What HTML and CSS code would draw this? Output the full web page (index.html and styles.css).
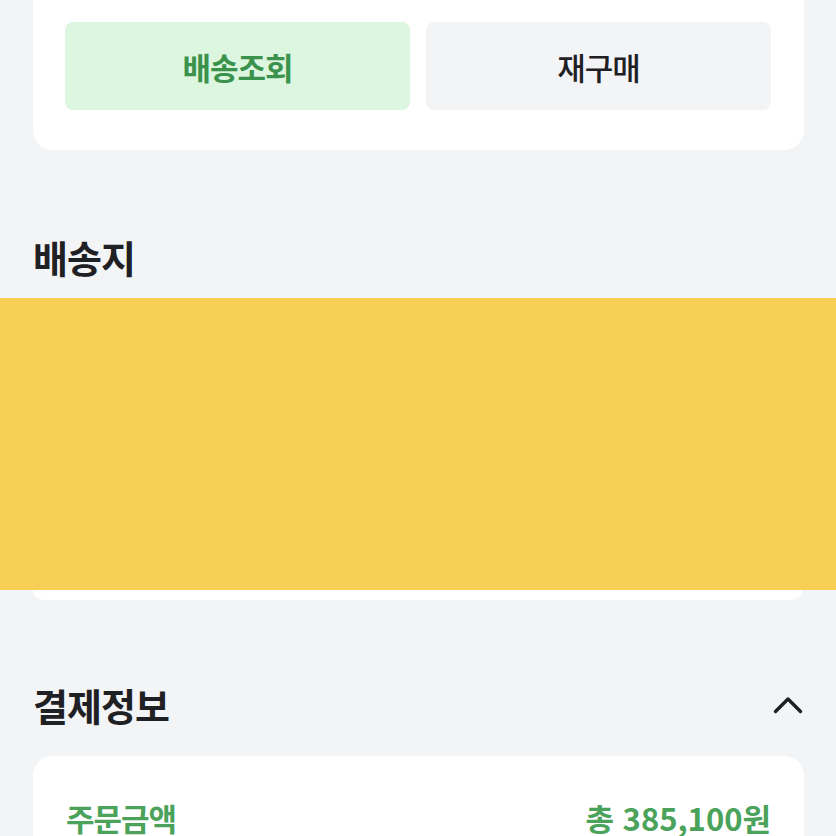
FILE: index.html
```html
<!DOCTYPE html>
<html lang="ko">
<head>
    <meta charset="UTF-8">
    <meta name="viewport" content="width=device-width, initial-scale=1.0">
    <title>주문상세</title>
    <link rel="stylesheet" href="styles.css">
</head>
<body>

<div class="top-card">
    <button class="btn btn-primary">배송조회</button>
    <button class="btn btn-gray">재구매</button>
</div>

<h2 class="section-title">배송지</h2>
<div class="address-banner"></div>
<div class="address-card"></div>

<div class="section-head">
    <h2 class="section-title flat">결제정보</h2>
    <svg class="chevron" width="30" height="18" viewBox="0 0 30 18">
        <path d="M2.5 15.5 L15 3 L27.5 15.5" fill="none" stroke="#1f2024" stroke-width="3.4" stroke-linecap="round" stroke-linejoin="round"/>
    </svg>
</div>

<div class="pay-card">
    <div class="pay-row">
        <span class="pay-label">주문금액</span>
        <span class="pay-value">총 385,100원</span>
    </div>
</div>

</body>
</html>
```

FILE: styles.css
```css
body {
    font-family: "Noto Sans CJK KR", "Noto Sans", sans-serif;
    margin: 0;
    padding: 0;
    background-color: #f2f4f6;
    color: #1f2024;
}
.top-card {
    display: flex;
    gap: 16px;
    margin: 0 32px 0 33px;
    padding: 22px 33px 40px 32px;
    background: #fff;
    border-radius: 0 0 20px 20px;
}
.btn {
    flex: 1;
    height: 88px;
    border: none;
    border-radius: 8px;
    font-family: inherit;
    font-size: 31px;
    letter-spacing: -1px;
    cursor: pointer;
}
.btn-primary {
    background-color: #ddf6e0;
    color: #3a924c;
    font-weight: 700;
}
.btn-gray {
    background-color: #f2f4f6;
    color: #1f2024;
    font-weight: 500;
}
.section-title {
    margin: 86px 33px 20px;
    font-size: 38px;
    line-height: 42px;
    font-weight: 700;
    letter-spacing: -1px;
}
.section-title.flat {
    margin: 0;
}
.address-banner {
    height: 292px;
    background-color: #f7cf55;
}
.address-card {
    height: 10px;
    margin: 0 34px 0 33px;
    background: #fff;
    border-radius: 0 0 10px 10px;
}
.section-head {
    display: flex;
    justify-content: space-between;
    align-items: center;
    margin: 84px 33px 30px;
}
.pay-card {
    margin: 0 32px 0 33px;
    padding: 44px 33px 30px 33px;
    background: #fff;
    border-radius: 20px 20px 0 0;
}
.pay-row {
    display: flex;
    justify-content: space-between;
    align-items: center;
    line-height: 36px;
    font-size: 31px;
    font-weight: 700;
    color: #4aa25b;
    letter-spacing: -1px;
}
.pay-value {
    letter-spacing: 0;
}
```
